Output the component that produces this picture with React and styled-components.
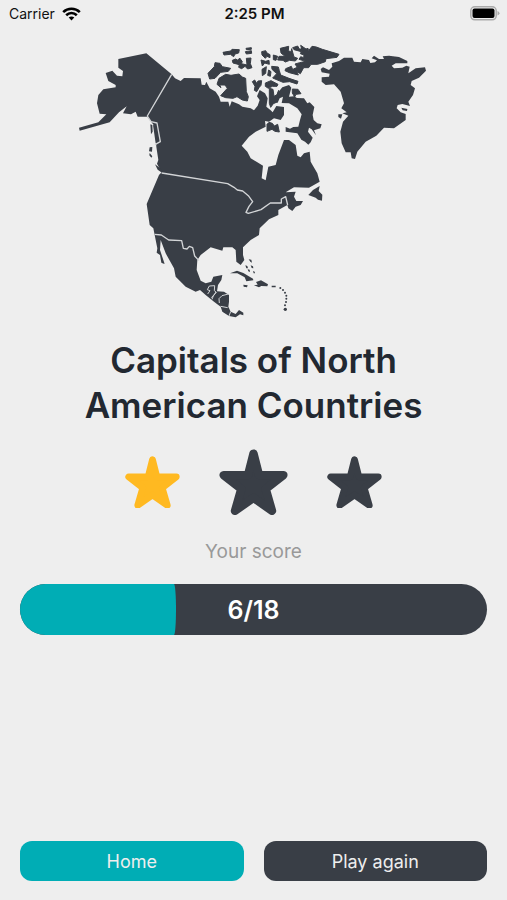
import React, { Component } from 'react';
import styled, { createGlobalStyle } from 'styled-components';

const colors = {
  background: '#eeeeee',
  dark: '#393e46',
  title: '#222831',
  teal: '#00adb5',
  yellow: '#ffb921',
  grey: '#999999',
  border: '#d3d5d7',
};

const GlobalStyle = createGlobalStyle`
  * {
    box-sizing: border-box;
  }
  body {
    margin: 0;
    background: ${colors.background};
    font-family: Inter, "Liberation Sans", sans-serif;
  }
`;

const StyledScreen = styled.div`
  min-height: 100vh;
  display: flex;
  flex-direction: column;
  background: ${colors.background};
`;

const StyledStatusBar = styled.header`
  height: 27px;
  padding: 0 7px 0 9px;
  display: grid;
  grid-template-columns: 1fr auto 1fr;
  align-items: center;
  font-size: 14px;
  color: #111111;
`;

const StyledCarrier = styled.div`
  display: flex;
  align-items: center;
  gap: 7px;
`;

const StyledTime = styled.time`
  font-size: 15px;
  font-weight: 600;
`;

const StyledBattery = styled.svg`
  justify-self: end;
`;

const StyledMain = styled.main`
  flex: 1;
  padding: 8px 20px 0;
  display: flex;
  flex-direction: column;
  align-items: center;
`;

const StyledMap = styled.svg`
  width: 80%;
  max-width: 370px;
  height: auto;
  fill: ${colors.dark};
`;

const StyledTitle = styled.h1`
  max-width: 380px;
  margin: 13px 0 0;
  font-size: 35px;
  font-weight: 600;
  line-height: 45px;
  text-align: center;
  color: ${colors.title};
`;

const StyledStars = styled.div`
  height: 68px;
  margin-top: 20px;
  display: flex;
  align-items: center;
  gap: 39px;
`;

const StyledStar = styled.svg`
  width: ${({ $large }) => $large ? 69 : 55}px;
  height: auto;
  fill: ${({ $active }) => $active ? colors.yellow : colors.dark};
  stroke: ${({ $active }) => $active ? colors.yellow : colors.dark};
  stroke-width: 20;
  stroke-linejoin: round;
`;

const StyledLabel = styled.p`
  margin: 24px 0 20px;
  font-size: 19px;
  line-height: 24px;
  color: ${colors.grey};
`;

const StyledBar = styled.div`
  width: 100%;
  height: 51px;
  display: grid;
  align-items: center;
  border-radius: 26px;
  overflow: hidden;
  background: ${colors.dark};
  & > * {
    grid-area: 1 / 1;
  }
`;

const StyledBarFill = styled.div`
  height: 100%;
  border-radius: 0 2px 2px 0 / 0 50% 50% 0;
  background: ${colors.teal};
`;

const StyledBarText = styled.span`
  font-size: 25px;
  font-weight: 600;
  text-align: center;
  color: white;
`;

const StyledFooter = styled.footer`
  padding: 0 20px 19px;
  display: grid;
  grid-template-columns: 1fr 1fr;
  gap: 20px;
`;

const StyledButton = styled.button`
  height: 40px;
  padding: 0;
  border: 0;
  border-radius: 12px;
  font-family: inherit;
  font-size: 18px;
  color: ${colors.background};
  background: ${({ $primary }) => $primary ? colors.teal : colors.dark};
  cursor: pointer;
`;

const WifiIcon = () => (
  <svg width="19" height="14" viewBox="0 0 19 14" fill="none" stroke="#000" strokeWidth="2.6">
    <path d="M1.2 5.1C5.8.7 13.2.7 17.8 5.1" />
    <path d="M4.2 8.2c3-2.9 7.6-2.9 10.6 0" />
    <path d="M6.7 10.5c1.600-1.500 4-1.500 5.600 0L9.500 13.600z" fill="#000" stroke="none" />
  </svg>
);

const BatteryIcon = () => (
  <StyledBattery width="30" height="15" viewBox="0 0 30 15">
    <rect x="0.8" y="0.8" width="25.4" height="13" rx="4" fill="#eee" stroke="#aaa" strokeWidth="1.5" />
    <rect x="2.5" y="2.5" width="22" height="9.6" rx="2" fill="#000" />
    <path d="M27.5 5v4.6q2-.8 2-2.3t-2-2.3z" fill="#aaa" />
  </StyledBattery>
);

const Star = ({ active, large }) => (
  <StyledStar $active={active} $large={large} viewBox="0 0 164 158">
    <path d="M82 11L95 62H153L111 95L126 147L82 116L38 147L53 95L11 62H69Z" />
  </StyledStar>
);

const NorthAmerica = () => (
  <StyledMap viewBox="0 0 1110 870" role="img" aria-label="North America">
    {/* mainland */}
    <path d="M30 278L88 262L112 238L92 236L84 205L88 180L103 163L140 157V150L118 138L110 114L130 107L144 122L160 124L162 108L148 98V72L232 55L308 118L318 130L335 138L345 129L395 130L398 149L408 150L412 140L422 160L440 170L450 185L455 200L478 200L482 215L488 199L510 208L520 215L545 220L555 226L566 212L572 195L564 184L572 165L588 175L596 190L592 215L605 226L611 232L622 213L645 216V240L635 255L615 250L600 260L588 258L590 275L560 290L540 305L518 332L535 350L545 370L565 382L582 392L578 430L590 436L598 395L620 390L628 360L645 315L660 315L680 330L685 362L695 367L705 355L722 350L725 380L745 415L752 440L720 458L675 457L650 472L680 470L675 485L682 498L702 498L695 510L680 515L670 528L658 520L655 510L628 525V540L600 553L572 580L570 600L545 615L522 637V660L526 675L515 690L502 680L500 645L490 637H463L460 647L425 637L395 660L385 675L383 705L395 737L410 745L427 740L433 725L460 720L457 735L447 750L444 769L465 770L480 780V800L478 815L485 830L500 837L510 825L523 833V841L513 838L500 847L480 843L460 830L455 815L435 800L410 780L393 765L380 770L350 755L320 725L315 700L290 655L275 615L273 645L287 687L277 683L273 660L263 653L265 640L257 600L253 580L242 570L233 507L270 420L278 412L264 386L268 375L262 335L258 275L235 245L206 245L200 230L186 238L162 235L173 214L150 232L122 262L32 287Z" />
    {/* pacific coast islands */}
    <path d="M244 268L250 270L251 290L246 298Z M252 270L262 272L270 318L260 325Z M242 337L250 336L249 350L240 349Z M242 354L250 364L247 368L241 361Z M258 388L272 398L282 408L280 414L266 404Z" />
    {/* greenland */}
    <path transform="translate(750 30)" d="M5 72L12 67L30 75L40 65L38 55L60 48L75 38L100 38L105 50L125 52L130 42L150 45L154 54L168 52L174 46L158 40L165 32L180 42L195 42L191 34L210 32L240 36L265 48V55L230 55L218 62L225 70L250 68L262 62L272 65L268 85L290 70L318 67L321 77L300 98L278 108L275 120L288 130L282 150L268 170L273 183L250 177L236 180L233 190L245 202L260 207V225L225 250L195 248L172 272L140 290L115 320L108 342L98 340L95 322L80 322L68 295L64 260L72 230L88 212L70 205L83 202L67 190L75 175L65 140L45 118L20 120L8 110V97L30 95L32 86L8 82Z M58 208L70 208L66 221L58 216Z M247 188L265 192L264 198L251 196Z" />
    {/* baffin island */}
    <path transform="translate(360 0)" d="M255 203L265 175L280 157L300 150L307 158L300 185L315 184L324 189L345 190L355 205L362 202L376 216L371 240L374 255L385 265L398 268L394 280L375 286L381 301L368 283L360 278L357 290L371 308L365 322L358 329L348 320L337 314L325 295L290 290V276L303 281L313 276L328 275L333 255L338 238L325 220L300 205L278 204L282 185L272 190L266 203Z" />
    {/* arctic islands */}
    <path transform="translate(360 0)" stroke={colors.dark} strokeWidth="3" strokeLinejoin="round" d="M57 115L76 95L78 83L93 85L100 95L125 100L118 109L95 112L78 130L62 132Z M90 130L110 118L126 121L150 117L160 126L170 130L172 170L178 185L175 198L160 195L144 185L132 190L110 188L95 182L115 160L108 150L92 150L96 158L84 148Z M102 52L125 48L129 43L151 44L149 54L138 57L134 65L124 58L105 60Z M130 76L140 72L147 76L152 69L160 80L157 86L174 90L172 70L186 69L184 86L189 98L176 102L168 94L158 101L149 97L151 89L132 84Z M171 40L187 38V43L172 44Z M169 50L187 47L188 55L172 57Z M218 50L230 47L234 54L243 59V68L234 64L229 70L219 60Z M253 60L266 64L261 76L253 74Z M216 75L230 79L240 76L241 88L227 84L220 93Z M219 103L232 95L230 115L220 122Z M239 105L246 110L244 124L236 121Z M248 94L268 96L271 107L275 120L300 130L327 139L324 147L302 140L282 142L251 129L263 116L249 103Z M190 140L197 135L203 145L207 138L218 137L216 151L210 158L203 170L196 166L198 154Z M229 144L246 137L267 148L264 154L250 154L238 160L229 154Z M241 160L252 163L255 184L264 179L269 166L262 202L253 206L245 217L241 205Z M274 40L299 34L298 47L306 51L308 41L315 66L326 70L319 78L302 76L289 81L282 76L266 75L270 64L288 64L276 54Z M311 38L326 33L331 42L338 42L335 31L351 42L357 40L359 47L369 34L382 36L400 43L450 58L444 67L411 71L409 80L386 88L366 88L359 98L344 98L334 116L325 110L311 112L313 102L325 97L318 87L332 83L350 79L330 73L335 65L344 68L345 60L334 56L337 50L315 44Z M290 101L307 94L313 108L324 110L328 120L301 113L288 107Z M310 162L327 163L336 176L321 178L317 186L310 174Z M234 268L240 262L250 265L256 273L266 268L271 291L258 289L249 283L234 289Z" />
    {/* newfoundland and the caribbean */}
    <path transform="translate(450 375)" d="M268 105L282 90L302 78L299 93L310 104L309 122L297 119L290 113Z M33 340L54 332L73 339L102 356L103 361L82 364L77 352L55 340Z M73 374L86 376L84 382L74 380Z M105 376L116 374L111 366L126 361L147 373L145 379L127 378L120 382Z M158 377L170 377V382L158 382Z M89 298L97 299L99 308L94 305Z M79 316L85 318L87 325L82 325Z M95 316L102 319L103 325L98 324Z M86 328L92 329L93 336L88 334Z M102 333L107 335L108 340L104 340Z" />
    <g>
      <circle cx="634" cy="759" r="3" />
      <circle cx="642" cy="765" r="3" />
      <circle cx="648" cy="773" r="3" />
      <circle cx="652" cy="782" r="3" />
      <circle cx="652" cy="791" r="3" />
      <circle cx="651" cy="801" r="3" />
      <circle cx="648" cy="811" r="3" />
      <circle cx="649" cy="823" r="5" />
    </g>
    {/* country borders */}
    <g fill="none" stroke={colors.border} strokeWidth="4" strokeLinejoin="round">
      <path d="M308 118L235 243L246 260L264 264L274 320L258 329" />
      <path d="M278 414L476 446L495 457L505 465L521 468L538 482L551 500L540 514L531 532L538 535L576 524L604 504H637V492L650 485L656 510" />
      <path d="M257 598L277 600L299 615L338 617L343 640L354 642L361 634L371 638L377 663L390 677" />
      <path d="M416 777L423 767L415 764L421 753L437 752L436 767L442 772L427 788M441 771L433 783L429 793M478 777L459 782L450 791L451 804M455 814L476 818M485 830L480 843" strokeWidth="3" />
    </g>
  </StyledMap>
);

class App extends Component {
  state = {
    score: 6,
    total: 18
  }
  render() {
    const { score, total } = this.state;
    return (
      <StyledScreen>
        <GlobalStyle />
        <StyledStatusBar>
          <StyledCarrier>
            Carrier
            <WifiIcon />
          </StyledCarrier>
          <StyledTime>2:25 PM</StyledTime>
          <BatteryIcon />
        </StyledStatusBar>
        <StyledMain>
          <NorthAmerica />
          <StyledTitle>Capitals of North American Countries</StyledTitle>
          <StyledStars>
            <Star active />
            <Star large />
            <Star />
          </StyledStars>
          <StyledLabel>Your score</StyledLabel>
          <StyledBar>
            <StyledBarFill style={{ width: `${score / total * 100}%` }} />
            <StyledBarText>{score}/{total}</StyledBarText>
          </StyledBar>
        </StyledMain>
        <StyledFooter>
          <StyledButton $primary>Home</StyledButton>
          <StyledButton>Play again</StyledButton>
        </StyledFooter>
      </StyledScreen>
    );
  }
}

export default App;
